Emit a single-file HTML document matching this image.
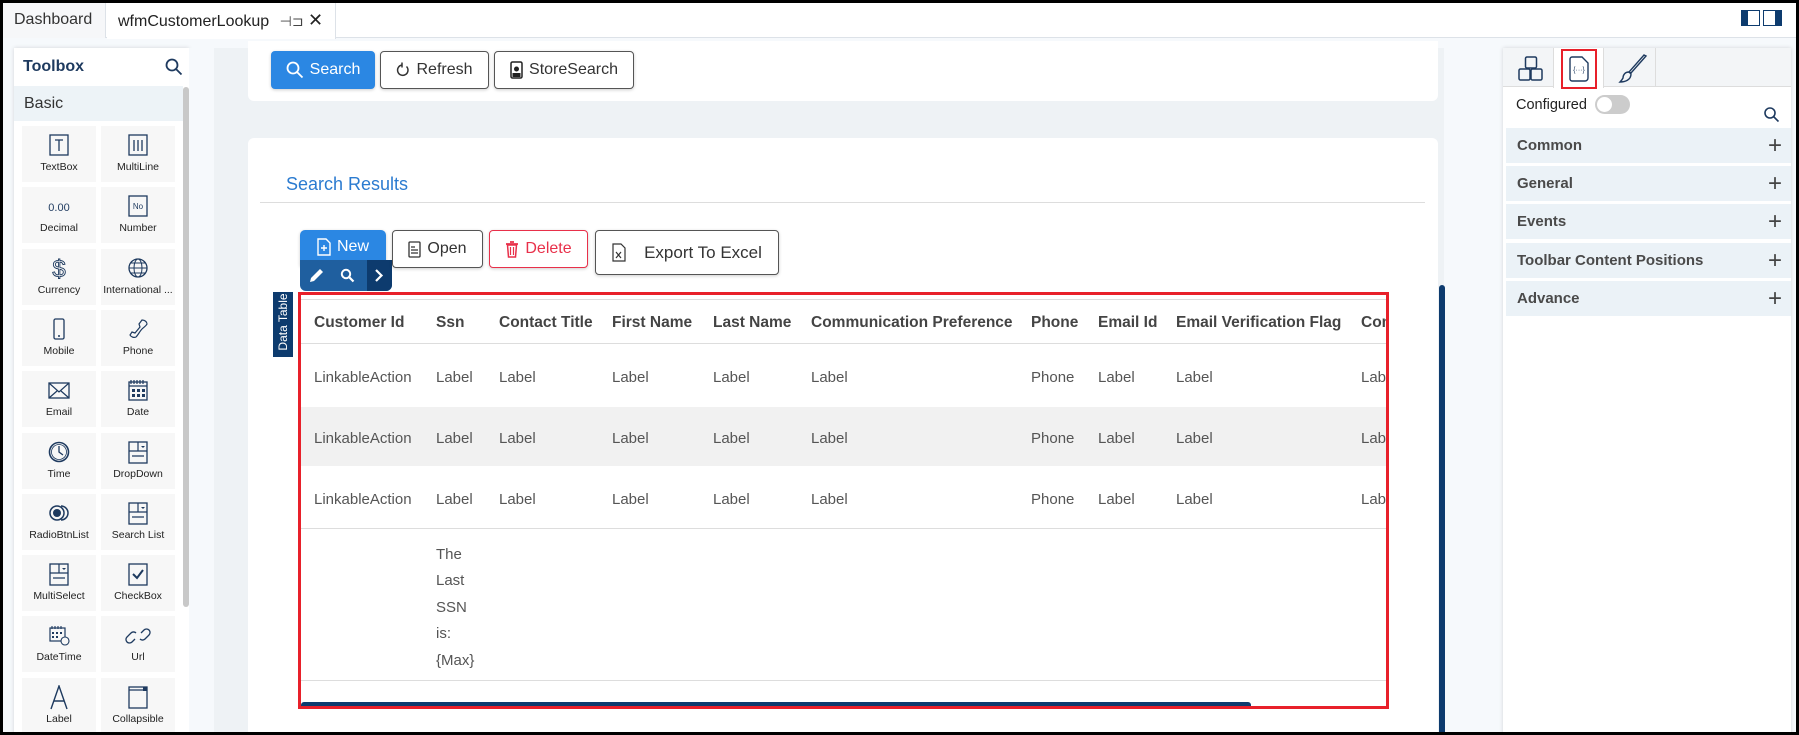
<!DOCTYPE html>
<html><head><meta charset="utf-8"><style>
*{box-sizing:border-box;margin:0;padding:0}
body{width:1799px;height:735px;overflow:hidden;background:#000;font-family:"Liberation Sans",sans-serif;position:relative}
.abs{position:absolute}
#app{position:absolute;left:3px;top:3px;width:1793px;height:729px;background:#f6f9fc;overflow:hidden}
.tab{position:absolute;top:0;height:35px;font-size:16px;color:#333;line-height:34px;padding-left:11px}
.btn{position:absolute;border:1.5px solid #555;border-radius:4px;background:#fff;font-size:16px;color:#333;display:flex;align-items:center;justify-content:center;gap:6px;box-shadow:0 1px 3px rgba(0,0,0,.2)}
.cell{position:absolute;width:74px;height:56px;background:#f7f7f7;text-align:center;font-size:10.5px;color:#222}
.cell svg{display:block;margin:7px auto 3px}
.th{position:absolute;top:311px;font-size:15.5px;font-weight:bold;color:#444;white-space:nowrap}
.td{position:absolute;font-size:15px;color:#555;white-space:nowrap}
.sec{position:absolute;left:1503px;width:285px;height:35px;background:#ebf2f7;font-size:15px;font-weight:bold;color:#4a4a4a;line-height:35px;padding-left:11px}
.sec span{position:absolute;right:9px;top:0;font-size:24px;font-weight:300;color:#444}
</style></head><body>
<div id="app">
<div class="abs" style="left:0;top:0;width:1793px;height:35px;background:#fff;border-bottom:1px solid #dde2e8"></div>
<div class="tab" style="left:0;width:103px;background:#f6f7f9;border-right:1px solid #dde2e8">Dashboard</div>
<div class="tab" style="left:104px;width:229px;background:#fff;border-right:1px solid #dde2e8;height:36px;color:#222">wfmCustomerLookup <span style="font-size:14px;color:#444;margin-left:6px">⊣⊐</span> <span style="font-size:18px">✕</span></div>
<div class="abs" style="left:1738px;top:7px;width:19px;height:16px;border:1.5px solid #0d3b6e;border-left-width:7px"></div>
<div class="abs" style="left:1760px;top:7px;width:19px;height:16px;border:1.5px solid #0d3b6e;border-right-width:7px"></div>

<div class="abs" style="left:11px;top:45px;width:175px;height:690px;background:#fff;box-shadow:0 0 4px rgba(0,0,0,.15)"></div>
<div class="abs" style="left:20px;top:55px;font-size:16px;font-weight:bold;color:#1e3a5f">Toolbox</div>
<svg class="abs" style="left:162px;top:55px" width="18" height="18" viewBox="0 0 18 18"><circle cx="7" cy="7" r="5.5" fill="none" stroke="#1e3a5f" stroke-width="1.8"/><path d="M11 11l5.5 5.5" stroke="#1e3a5f" stroke-width="1.8"/></svg>
<div class="abs" style="left:11px;top:83px;width:169px;height:35px;background:#edf3f7;font-size:16px;color:#333;line-height:35px;padding-left:10px">Basic</div>
<div class="abs" style="left:180px;top:84px;width:6px;height:520px;background:#c8c8c8;border-radius:3px"></div>

<div id="cells"></div>

<div class="abs" style="left:186px;top:45px;width:25px;height:690px;background:#f6f9fc"></div>
<div class="abs" style="left:211px;top:45px;width:1230px;height:690px;background:#eef2f5"></div>
<div class="abs" style="left:245px;top:38px;width:1190px;height:60px;background:#fff;border-radius:0 0 6px 6px"></div>
<div class="btn" style="left:268px;top:48px;width:104px;height:38px;background:#2b87e3;border-color:#2b87e3;color:#fff"><svg width="18" height="18" viewBox="0 0 18 18"><circle cx="7" cy="7" r="5.5" fill="none" stroke="#fff" stroke-width="1.8"/><path d="M11 11l5.5 5.5" stroke="#fff" stroke-width="1.8"/></svg>Search</div>
<div class="btn" style="left:377px;top:48px;width:109px;height:38px"><svg width="14" height="16" viewBox="0 0 14 16"><path d="M10.5 4.5A5.2 5.2 0 1 1 6 3" fill="none" stroke="#333" stroke-width="1.5"/><path d="M6 0.5v5" stroke="#333" stroke-width="1.5"/></svg>Refresh</div>
<div class="btn" style="left:491px;top:48px;width:140px;height:38px"><svg width="13" height="18" viewBox="0 0 13 18"><rect x="1" y="1" width="11" height="16" rx="1.5" fill="none" stroke="#222" stroke-width="1.5"/><circle cx="6.5" cy="8" r="2.5" fill="#222"/><rect x="2.5" y="12" width="8" height="4" fill="#222"/></svg>StoreSearch</div>

<div class="abs" style="left:245px;top:135px;width:1190px;height:600px;background:#fff;border-radius:6px"></div>
<div class="abs" style="left:283px;top:171px;font-size:18px;color:#2b7bd0">Search Results</div>
<div class="abs" style="left:257px;top:199px;width:1165px;height:1px;background:#ddd"></div>

<div class="btn" style="left:297px;top:227px;width:86px;height:36px;background:#2b87e3;border-color:#2b87e3;color:#fff;align-items:flex-start;padding-top:7px;border-radius:5px 5px 0 0"><svg width="14" height="18" viewBox="0 0 14 18"><path d="M1 1h8l4 4v12H1z" fill="none" stroke="#fff" stroke-width="1.4"/><path d="M7 7v6M4 10h6" stroke="#fff" stroke-width="1.4"/></svg>New</div>
<div class="abs" style="left:297px;top:257px;width:92px;height:31px;background:#1f5f9f;border-radius:0 0 6px 6px;overflow:hidden">
<div class="abs" style="left:67px;top:0;width:25px;height:31px;background:#0d3b6e"></div>
<svg class="abs" style="left:8px;top:7px" width="17" height="17" viewBox="0 0 17 17"><path d="M2 15l1-4 9-9 3 3-9 9z" fill="#fff"/></svg>
<svg class="abs" style="left:40px;top:8px" width="15" height="15" viewBox="0 0 15 15"><circle cx="6" cy="6" r="4.2" fill="none" stroke="#fff" stroke-width="2"/><path d="M9 9l4.5 4.5" stroke="#fff" stroke-width="2.2"/></svg>
<svg class="abs" style="left:74px;top:8px" width="10" height="15" viewBox="0 0 10 15"><path d="M2 2l5.5 5.5L2 13" fill="none" stroke="#fff" stroke-width="2.2"/></svg>
</div>
<div class="btn" style="left:389px;top:227px;width:91px;height:38px"><svg width="13" height="17" viewBox="0 0 13 17"><rect x="1" y="1" width="11" height="15" rx="1" fill="none" stroke="#333" stroke-width="1.3"/><path d="M3 6h4M3 9h7M3 12h7" stroke="#333" stroke-width="1.3"/></svg>Open</div>
<div class="btn" style="left:486px;top:227px;width:99px;height:38px;border-color:#e8304a;color:#e8304a"><svg width="14" height="17" viewBox="0 0 14 17"><path d="M1 3h12M5 1h4" stroke="#e8304a" stroke-width="1.8"/><path d="M2.5 4h9l-1 12h-7z" fill="none" stroke="#e8304a" stroke-width="1.5"/><path d="M5.5 6v8M8.5 6v8" stroke="#e8304a" stroke-width="1.2"/></svg>Delete</div>
<div class="btn" style="left:592px;top:227px;width:184px;height:45px;font-size:17px;gap:18px"><svg width="14" height="19" viewBox="0 0 14 19"><path d="M1 1h8l4 4v13H1z" fill="none" stroke="#333" stroke-width="1.2"/><path d="M4 9l5 6M9 9l-5 6" stroke="#333" stroke-width="1.2"/></svg>Export To Excel</div>

<div class="abs" style="left:270px;top:289px;width:20px;height:65px;background:#0d3b6e"></div>
<div class="abs" style="left:272px;top:350px;transform:rotate(-90deg);transform-origin:0 0;color:#fff;font-size:12px;width:62px;line-height:16px;text-align:center">Data Table</div>

<div class="abs" style="left:295px;top:289px;width:1091px;height:417px;border:3px solid #e8202a;overflow:hidden;background:#fff">
<div style="position:relative;left:-298px;top:-292px;width:1800px;height:800px">
<div class="abs" style="left:298px;top:296px;width:1088px;height:1px;background:#ddd"></div>
<div class="abs" style="left:298px;top:340px;width:1088px;height:1px;background:#ddd"></div>
<div class="abs" style="left:298px;top:404px;width:1088px;height:59px;background:#f1f1f1"></div>
<div class="abs" style="left:298px;top:525px;width:1088px;height:1px;background:#ddd"></div>
<div class="abs" style="left:298px;top:677px;width:1088px;height:1px;background:#ddd"></div>
<div class="abs" style="left:298px;top:699px;width:950px;height:9px;background:#0d3b6e;border-radius:3px"></div>
<div class="th" style="left:311px">Customer Id</div><div class="th" style="left:433px">Ssn</div><div class="th" style="left:496px">Contact Title</div><div class="th" style="left:609px">First Name</div><div class="th" style="left:710px">Last Name</div><div class="th" style="left:808px">Communication Preference</div><div class="th" style="left:1028px">Phone</div><div class="th" style="left:1095px">Email Id</div><div class="th" style="left:1173px">Email Verification Flag</div><div class="th" style="left:1358px">Com</div>
<div id="rows"></div>
<div class="td" style="left:433px;top:539px;line-height:26.4px">The<br>Last<br>SSN<br>is:<br>{Max}</div>
</div></div>

<div class="abs" style="left:1436px;top:282px;width:6px;height:460px;background:#0d3b6e;border-radius:3px"></div>

<div class="abs" style="left:1500px;top:45px;width:288px;height:690px;background:#fff;box-shadow:0 0 4px rgba(0,0,0,.15)"></div>
<div class="abs" style="left:1500px;top:45px;width:288px;height:39px;background:#f3f5f7;border-bottom:1px solid #ddd"></div>
<div class="abs" style="left:1550px;top:45px;width:51px;height:40px;background:#fff;border-left:1px solid #ddd;border-right:1px solid #ddd"></div>
<div class="abs" style="left:1652px;top:45px;width:1px;height:39px;background:#ddd"></div>
<svg class="abs" style="left:1515px;top:53px" width="26" height="26" viewBox="0 0 26 26"><rect x="7.5" y="1" width="11" height="11" rx="1.5" fill="none" stroke="#1e3a5f" stroke-width="1.5"/><rect x="1" y="13" width="11" height="11" rx="1.5" fill="none" stroke="#1e3a5f" stroke-width="1.5"/><rect x="13" y="13" width="11" height="11" rx="1.5" fill="none" stroke="#1e3a5f" stroke-width="1.5"/></svg>
<div class="abs" style="left:1558px;top:46px;width:36px;height:40px;border:2.5px solid #e8202a"></div>
<svg class="abs" style="left:1566px;top:53px" width="20" height="26" viewBox="0 0 20 26"><path d="M3 1h10l6 6v15a3 3 0 0 1-3 3H3a2 2 0 0 1-2-2V3a2 2 0 0 1 2-2z" fill="none" stroke="#1e3a5f" stroke-width="1.4"/><text x="10" y="16" font-size="7" fill="#1e3a5f" text-anchor="middle" font-family="Liberation Sans">{···}</text></svg>
<svg class="abs" style="left:1615px;top:51px" width="30" height="30" viewBox="0 0 30 30"><path d="M28 2L13 19l-2-1L26 1z" fill="none" stroke="#1e3a5f" stroke-width="1.4"/><path d="M11 18c-4 0-6 3-6 6-1 2-3 4-3 4 5 0 11-2 11-8z" fill="none" stroke="#1e3a5f" stroke-width="1.4"/></svg>
<div class="abs" style="left:1513px;top:94px;font-size:14.5px;color:#222">Configured</div>
<div class="abs" style="left:1592px;top:92px;width:35px;height:19px;border-radius:10px;background:#ccc"><div style="position:absolute;left:2px;top:2px;width:15px;height:15px;border-radius:50%;background:#fff"></div></div>
<svg class="abs" style="left:1760px;top:103px" width="17" height="17" viewBox="0 0 17 17"><circle cx="7" cy="7" r="5" fill="none" stroke="#1e3a5f" stroke-width="1.6"/><path d="M10.5 10.5l5 5" stroke="#1e3a5f" stroke-width="1.6"/></svg>
<div class="sec" style="top:125px">Common<span>+</span></div>
<div class="sec" style="top:163px">General<span>+</span></div>
<div class="sec" style="top:201px">Events<span>+</span></div>
<div class="sec" style="top:240px">Toolbar Content Positions<span>+</span></div>
<div class="sec" style="top:278px">Advance<span>+</span></div>
</div>
<script>
var C='#1e3a5f';
var ic={
TextBox:'<rect x="4" y="2" width="18" height="20" fill="none" stroke="'+C+'" stroke-width="1.3"/><path d="M9 7h8M13 7v11" stroke="'+C+'" stroke-width="1.3"/>',
MultiLine:'<rect x="4" y="2" width="18" height="20" fill="none" stroke="'+C+'" stroke-width="1.3"/><path d="M9 7v11M13 7v11M17 7v11" stroke="'+C+'" stroke-width="1.3"/>',
Decimal:'<text x="13" y="17" font-size="11" fill="'+C+'" text-anchor="middle" font-family="Liberation Sans">0.00</text>',
Number:'<rect x="4" y="2" width="18" height="20" fill="none" stroke="'+C+'" stroke-width="1.3"/><text x="13" y="15" font-size="8" fill="'+C+'" text-anchor="middle" font-family="Liberation Sans">No</text>',
Currency:'<text x="13" y="21" font-size="24" fill="none" stroke="'+C+'" stroke-width="0.9" text-anchor="middle" font-family="Liberation Sans">$</text>',
'International ...':'<circle cx="13" cy="12" r="9" fill="none" stroke="'+C+'" stroke-width="1.3"/><ellipse cx="13" cy="12" rx="4" ry="9" fill="none" stroke="'+C+'" stroke-width="1"/><path d="M4 12h18M6 7h14M6 17h14" stroke="'+C+'" stroke-width="1"/>',
Mobile:'<rect x="8" y="2" width="10" height="20" rx="1.5" fill="none" stroke="'+C+'" stroke-width="1.3"/><circle cx="13" cy="19" r="1" fill="'+C+'"/>',
Phone:'<path d="M17 3c3 0 5 2 5 4-1 2-3 3-5 5s-4 6-6 8c-2 1-5 0-6-2l2-3 3 1 5-6-1-3z" fill="none" stroke="'+C+'" stroke-width="1.2"/>',
Email:'<rect x="3" y="5" width="20" height="15" fill="none" stroke="'+C+'" stroke-width="1.3"/><path d="M3 5l10 9 10-9M3 20l8-7M23 20l-8-7" fill="none" stroke="'+C+'" stroke-width="1.2"/>',
Date:'<rect x="4" y="4" width="18" height="18" fill="none" stroke="'+C+'" stroke-width="1.3"/><path d="M6 2v4M9 2v4M12 2v4M15 2v4M18 2v4M4 8h18" stroke="'+C+'" stroke-width="1.2"/><path d="M7 11h3v3H7zM12 11h3v3h-3zM17 11h3v3h-3zM7 16h3v3H7zM12 16h3v3h-3zM17 16h3v3h-3z" fill="'+C+'"/>',
Time:'<circle cx="13" cy="12" r="9.5" fill="none" stroke="'+C+'" stroke-width="1.6"/><circle cx="13" cy="12" r="7.5" fill="none" stroke="'+C+'" stroke-width="0.8"/><path d="M13 6v6l4 3" fill="none" stroke="'+C+'" stroke-width="1.3"/>',
DropDown:'<rect x="4" y="2" width="18" height="21" fill="none" stroke="'+C+'" stroke-width="1.3"/><path d="M4 11h18M13 2v9M7 16h12" stroke="'+C+'" stroke-width="1.2"/><path d="M16 6h4l-2 2z" fill="'+C+'"/>',
RadioBtnList:'<circle cx="11" cy="12" r="7" fill="none" stroke="'+C+'" stroke-width="1.5"/><circle cx="11" cy="12" r="4" fill="'+C+'"/><path d="M15 5a7 7 0 0 1 0 14" fill="none" stroke="'+C+'" stroke-width="1.5"/>',
'Search List':'<rect x="4" y="2" width="18" height="21" fill="none" stroke="'+C+'" stroke-width="1.3"/><path d="M4 11h18M13 2v9M7 16h12" stroke="'+C+'" stroke-width="1.2"/><path d="M16 6h4l-2 2z" fill="'+C+'"/>',
MultiSelect:'<rect x="4" y="2" width="18" height="21" fill="none" stroke="'+C+'" stroke-width="1.3"/><path d="M4 11h18M13 2v9M7 16h12" stroke="'+C+'" stroke-width="1.2"/><path d="M16 6h4l-2 2z" fill="'+C+'"/>',
CheckBox:'<rect x="4" y="2" width="18" height="21" fill="none" stroke="'+C+'" stroke-width="1.3"/><path d="M8 12l4 4 6-8" fill="none" stroke="'+C+'" stroke-width="2"/>',
DateTime:'<rect x="4" y="5" width="15" height="13" fill="none" stroke="'+C+'" stroke-width="1.2"/><path d="M6 3v3M9 3v3M12 3v3M15 3v3" stroke="'+C+'" stroke-width="1.1"/><path d="M6 9h2v2H6zM10 9h2v2h-2zM14 9h2v2h-2zM6 13h2v2H6zM10 13h2v2h-2z" fill="'+C+'"/><circle cx="19" cy="18" r="4" fill="#f7f7f7" stroke="'+C+'" stroke-width="1.1"/>',
Url:'<path d="M10 15l-3 3a3.5 3.5 0 0 1-5-5l4-4a3.5 3.5 0 0 1 5 0M16 9l3-3a3.5 3.5 0 0 1 5 5l-4 4a3.5 3.5 0 0 1-5 0" fill="none" stroke="'+C+'" stroke-width="1.3" transform="translate(0,1)"/>',
Label:'<path d="M5 24L13 1l8 23M8 16h10" fill="none" stroke="'+C+'" stroke-width="1.4"/>',
Collapsible:'<rect x="4" y="2" width="18" height="21" fill="none" stroke="'+C+'" stroke-width="1.3"/><path d="M4 5h18" stroke="'+C+'" stroke-width="1.3"/><rect x="18" y="2" width="4" height="4" fill="'+C+'"/>'
};
var names=Object.keys(ic),h='';
names.forEach(function(n,i){var c=i%2,r=Math.floor(i/2);
h+='<div class="cell" style="left:'+(19+c*79)+'px;top:'+(123+r*61.3)+'px"><svg width="26" height="25" viewBox="0 0 26 25">'+ic[n]+'</svg>'+n+'</div>';});
document.getElementById('cells').innerHTML=h;
var cols=[[311,'LinkableAction'],[433,'Label'],[496,'Label'],[609,'Label'],[710,'Label'],[808,'Label'],[1028,'Phone'],[1095,'Label'],[1173,'Label'],[1358,'Label']];
var r='';[366,427,488].forEach(function(y){cols.forEach(function(c){r+='<div class="td" style="left:'+c[0]+'px;top:'+y+'px">'+c[1]+'</div>';});});
document.getElementById('rows').innerHTML=r;
</script>
</body></html>
